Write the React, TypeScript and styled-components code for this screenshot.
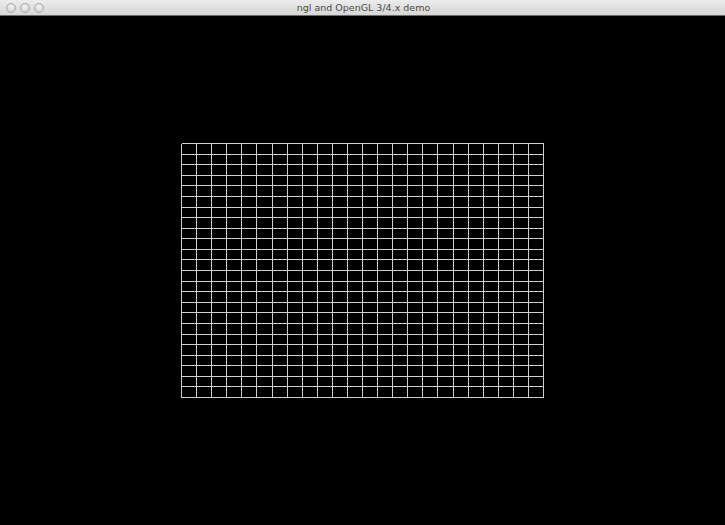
import React from "react";
import styled, { createGlobalStyle } from "styled-components";

const Global = createGlobalStyle`
  html, body { margin: 0; padding: 0; background: #000; }
  body { width: 725px; height: 525px; overflow: hidden; }
`;

const Window = styled.div`
  width: 725px;
  height: 525px;
  display: flex;
  flex-direction: column;
  background: #000;
`;

const TitleBar = styled.div`
  height: 15px;
  flex: 0 0 15px;
  display: flex;
  align-items: center;
  position: relative;
  background: linear-gradient(#ececec, #d6d6d6);
  border-bottom: 1px solid #6b6b6b;
`;

const Lights = styled.div`
  display: flex;
  gap: 4px;
  padding-left: 6px;
`;

const Light = styled.div`
  width: 10px;
  height: 10px;
  border-radius: 50%;
  box-sizing: border-box;
  border: 1px solid #a9a9a9;
  background: radial-gradient(circle at 50% 35%, #f4f4f4 0%, #dcdcdc 55%, #c4c4c4 100%);
`;

const Title = styled.div`
  position: absolute;
  left: 0;
  right: 0;
  top: 0;
  bottom: 0;
  display: flex;
  align-items: center;
  justify-content: center;
  font-family: "DejaVu Sans", "Liberation Sans", sans-serif;
  font-size: 9.5px;
  color: #4a4a4a;
  padding-left: 2px;
`;

const Canvas = styled.div`
  flex: 1;
  display: flex;
  align-items: center;
  justify-content: center;
  background: #000;
`;

const W = 363;
const H = 255;
const N = 24;

function Grid() {
  const lines: React.ReactNode[] = [];
  for (let i = 0; i <= N; i++) {
    const x = Math.round((i * (W - 1)) / N) + 0.5;
    lines.push(<line key={"v" + i} x1={x} y1={0.5} x2={x} y2={H - 0.5} />);
  }
  for (let j = 0; j <= N; j++) {
    const y = Math.round((j * (H - 1)) / N) + 0.5;
    lines.push(<line key={"h" + j} x1={0.5} y1={y} x2={W - 0.5} y2={y} />);
  }
  return (
    <svg width={W} height={H} viewBox={`0 0 ${W} ${H}`} shapeRendering="crispEdges">
      <g stroke="#cfcfcf" strokeWidth={1}>{lines}</g>
    </svg>
  );
}

export default function App() {
  return (
    <>
      <Global />
      <Window>
        <TitleBar>
          <Lights>
            <Light />
            <Light />
            <Light />
          </Lights>
          <Title>ngl and OpenGL 3/4.x demo</Title>
        </TitleBar>
        <Canvas>
          <Grid />
        </Canvas>
      </Window>
    </>
  );
}
